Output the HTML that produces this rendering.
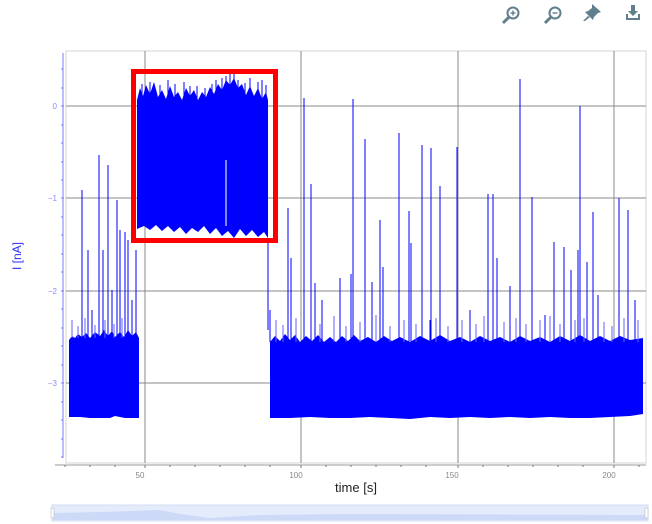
<!DOCTYPE html>
<html><head><meta charset="utf-8"><style>
html,body{margin:0;padding:0;background:#fff;width:652px;height:524px;overflow:hidden}
</style></head><body>
<svg width="652" height="524" viewBox="0 0 652 524" xmlns="http://www.w3.org/2000/svg" font-family="Liberation Sans, sans-serif">
<g fill="none" stroke="#5f7f8c" stroke-width="2">
<circle cx="513" cy="13" r="5.5"/><line x1="509" y1="17" x2="503" y2="23" stroke-width="3"/>
<line x1="510.5" y1="13" x2="515.5" y2="13" stroke-width="1.4"/><line x1="513" y1="10.5" x2="513" y2="15.5" stroke-width="1.4"/>
<circle cx="555" cy="13" r="5.5"/><line x1="551" y1="17" x2="545" y2="23" stroke-width="3"/>
<line x1="552.5" y1="13" x2="557.5" y2="13" stroke-width="1.4"/>
</g>
<g fill="#5f7f8c">
<path d="M592 4 L601 12 L598 13 L594 17 L593 20 L585 12 L588 11 L592 8 Z"/>
<path d="M588 16 L583 21 L585 21 L590 17Z"/>
<path d="M631 5h4v6h3l-5 5-5-5h3z"/>
<path d="M626 14h2v4h10v-4h2v6h-14z"/>
</g>
<rect x="66" y="51" width="580" height="412" fill="#fff" stroke="#d4d4d4" stroke-width="1"/>
<g stroke="#8a8a8a" stroke-width="1">
<line x1="66" y1="106" x2="646" y2="106"/><line x1="66" y1="198" x2="646" y2="198"/>
<line x1="66" y1="291" x2="646" y2="291"/><line x1="66" y1="383" x2="646" y2="383"/>
<line x1="145" y1="51" x2="145" y2="463"/><line x1="301" y1="51" x2="301" y2="463"/>
<line x1="458" y1="51" x2="458" y2="463"/><line x1="614" y1="51" x2="614" y2="463"/>
</g>
<line x1="63" y1="53" x2="63" y2="458" stroke="#7a7aff" stroke-width="1"/>
<g stroke="#7a7aff" stroke-width="1">
<path d="M61 69h2M61 88h2M61 106h3M61 125h2M61 143h2M61 162h2M61 180h2M61 198h3M61 217h2M61 235h2M61 254h2M61 272h2M61 291h3M61 309h2M61 328h2M61 346h2M61 365h2M61 383h3M61 402h2M61 420h2M61 439h2M61 457h2"/>
</g>
<g fill="#8a8aff" font-size="8" text-anchor="end">
<text x="57" y="109">0</text><text x="57" y="201">−1</text><text x="57" y="294">−2</text><text x="57" y="386">−3</text>
</g>
<text transform="translate(21,256) rotate(-90)" fill="#2a2aff" font-size="12" text-anchor="middle">I [nA]</text>
<line x1="55" y1="465" x2="646" y2="465" stroke="#999" stroke-width="1"/>
<g stroke="#777" stroke-width="1">
<path d="M65 465v2M90 465v2M115 465v2M145 465v3M170 465v2M195 465v2M220 465v2M245 465v2M270 465v2M301 465v3M326 465v2M351 465v2M376 465v2M401 465v2M426 465v2M458 465v3M483 465v2M508 465v2M533 465v2M558 465v2M583 465v2M614 465v3M639 465v2"/>
</g>
<g fill="#888" font-size="8" text-anchor="middle">
<text x="140" y="478">50</text><text x="296" y="478">100</text><text x="452" y="478">150</text><text x="609" y="478">200</text>
</g>
<text x="356" y="492" font-size="13" fill="#222" text-anchor="middle">time [s]</text>
<g fill="#0000ff">
<path d="M69 340 L72 336 L75 338 L78 334 L82 337 L86 333 L90 338 L95 332 L100 336 L104 330 L108 336 L112 331 L115 337 L120 332 L124 337 L128 330 L132 336 L136 332 L139 338 L139 418 L125 418 L115 416 L110 418 L90 418 L80 417 L69 417Z"/>
<path d="M137 100 L140 88 L143 96 L146 85 L150 94 L154 82 L158 97 L162 90 L166 99 L170 86 L174 97 L178 92 L182 100 L186 88 L190 96 L194 90 L198 100 L202 92 L206 97 L210 87 L214 94 L218 84 L222 90 L226 80 L230 85 L234 78 L238 88 L242 84 L246 95 L250 86 L254 96 L258 88 L262 99 L266 92 L268 100 L268 238 L264 232 L258 237 L252 230 L246 236 L240 229 L234 238 L228 231 L222 236 L216 228 L210 234 L204 226 L198 232 L192 228 L186 234 L180 227 L174 232 L168 226 L162 231 L156 225 L150 230 L144 226 L137 229Z"/>
<path d="M270 342 L275 336 L280 341 L285 334 L290 340 L295 335 L300 342 L306 336 L312 341 L318 335 L324 342 L330 337 L336 342 L342 336 L348 341 L354 335 L360 341 L368 337 L376 342 L384 336 L392 341 L400 337 L410 342 L420 336 L430 341 L440 335 L450 341 L460 337 L470 342 L480 336 L490 341 L500 337 L510 342 L520 336 L530 341 L540 337 L550 342 L560 336 L570 341 L580 335 L590 341 L600 336 L610 341 L620 336 L630 340 L643 338 L643 414 L630 416 L610 417 L590 418 L570 418 L550 417 L530 418 L510 417 L490 418 L470 417 L450 418 L430 417 L410 419 L390 418 L370 417 L350 418 L330 418 L310 417 L290 418 L270 418Z"/>
</g>
<line x1="226" y1="160" x2="226" y2="226" stroke="#b0b0ff" stroke-width="1.5"/>
<g stroke="#0000ff" stroke-width="1">
<path d="M82 340V190M88 340V250M99 340V155M108 340V165M117 340V200M120 340V230M125 340V232M132 340V300M103 340V250M92 340V310M112 340V290M128 340V240M136 340V250"/>
<path d="M268 238V330M270 342V310M288 342V208M291 342V258M304 342V98M311 342V184M315 342V283M340 342V278M351 342V274M353 342V99M365 342V139M372 342V282M380 342V220M383 342V267M399 342V133M409 342V211M411 342V243M422 342V145M431 342V148M440 342V186M457 342V147M488 342V194M493 342V194M497 342V258M510 342V286M520 342V79M532 342V197M554 342V242M564 342V247M571 342V270M578 342V250M580 342V106M587 342V262M593 342V212M598 342V295M619 342V198M628 342V210M635 342V300M322 342V300M430 342V320M470 342V310M545 342V315"/>
<path d="M150 100V82M160 100V85M175 100V84M190 100V86M205 100V88M212 100V84M222 100V78M230 100V74M238 100V80M245 100V83M258 100V82M266 100V85M142 100V84M168 100V80M184 100V82M197 100V86M216 100V80M226 100V76M234 100V74M250 100V78M262 100V80"/>
</g>
<g stroke="#6060ff" stroke-width="1">
<path d="M276 342V320M283 342V325M296 342V318M320 342V324M334 342V316M346 342V326M360 342V322M376 342V315M390 342V326M404 342V320M416 342V324M436 342V318M448 342V326M462 342V320M476 342V324M484 342V316M504 342V322M516 342V318M526 342V324M540 342V320M550 342V316M560 342V324M575 342V320M584 342V318M604 342V322M612 342V326M624 342V318M638 342V320"/>
<path d="M72 338V320M78 338V326M85 338V318M95 338V325M105 338V320M114 338V324M122 338V318"/>
</g>
<rect x="133.5" y="71.5" width="142" height="169" fill="none" stroke="#ff0000" stroke-width="5"/>
<rect x="52" y="505" width="596" height="16" fill="#e4ecfc" stroke="#d5def3"/>
<path d="M53 513 L100 512 L160 510 L180 514 L210 518 L260 515 L350 514 L647 515 L647 520 L53 520Z" fill="#ccdaf8"/>
<rect x="51" y="508" width="3" height="10" fill="#fff" stroke="#bbb" stroke-width="0.6"/>
<rect x="645" y="508" width="3" height="10" fill="#fff" stroke="#bbb" stroke-width="0.6"/>
</svg>
</body></html>
